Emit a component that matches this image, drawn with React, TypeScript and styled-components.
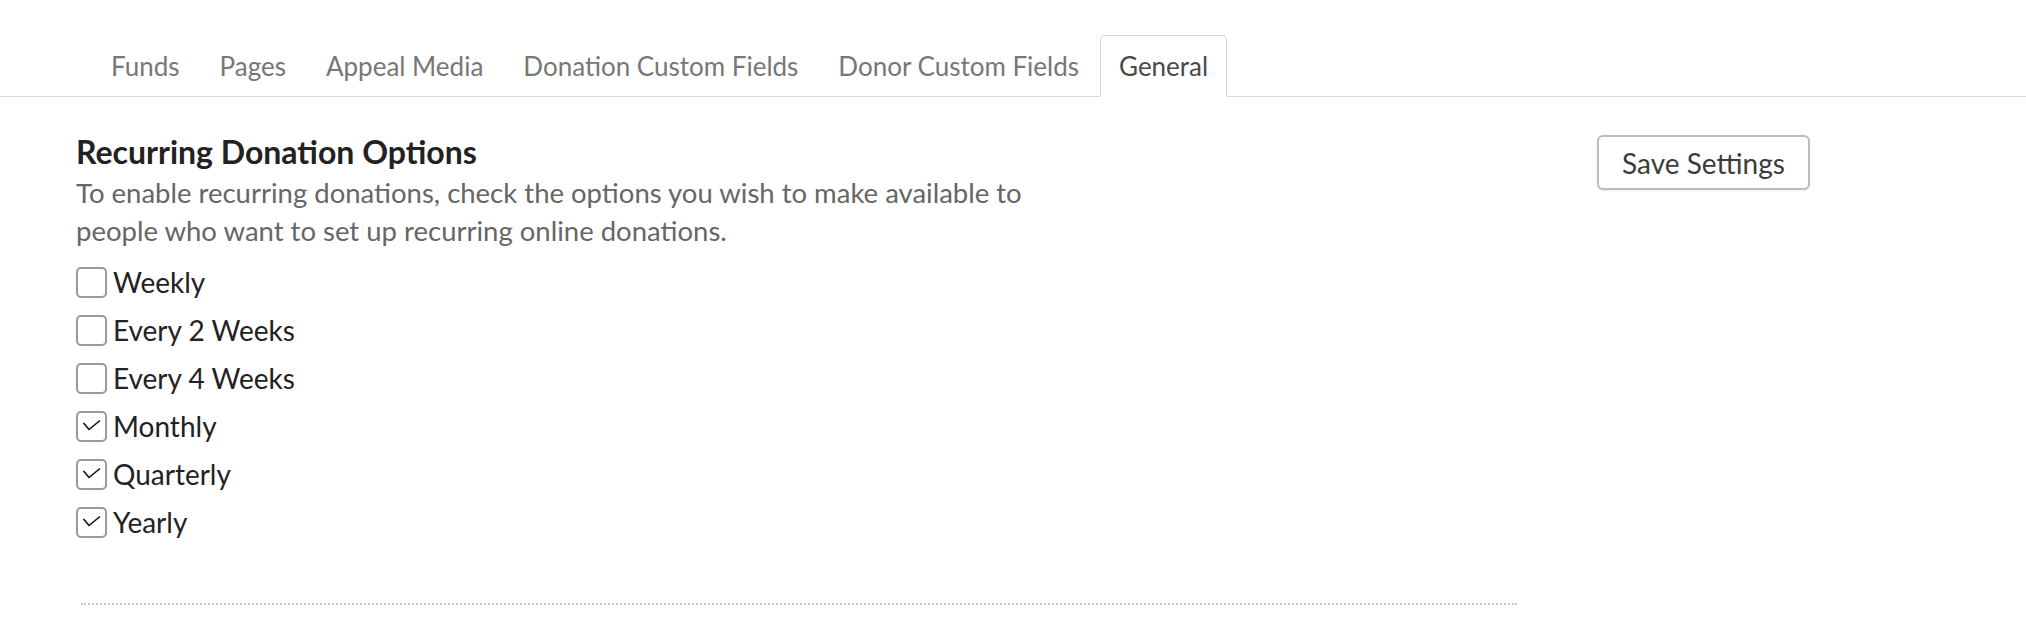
import styled, { createGlobalStyle } from 'styled-components'

const GlobalStyle = createGlobalStyle`
  html, body {
    margin: 0;
    padding: 0;
    background: #fff;
  }
  body {
    font-family: Lato, "Open Sans", "Liberation Sans", sans-serif;
    font-size: 26px;
    line-height: 1.43;
    color: #333;
  }
  * {
    box-sizing: border-box;
  }
`

const Page = styled.div`
  padding-top: 35px;
`

const TabList = styled.ul`
  display: flex;
  list-style: none;
  margin: 0;
  padding: 0 0 0 92px;
  border-bottom: 1px solid #dcdcdc;
`

const Tab = styled.li<{ $active?: boolean }>`
  margin: 0 2px -1px 0;
  padding: 12px 18px 11px;
  line-height: 37px;
  font-size: 26px;
  color: ${(p) => (p.$active ? '#4a4a4a' : '#777')};
  background: ${(p) => (p.$active ? '#fff' : 'transparent')};
  border: 1px solid ${(p) => (p.$active ? '#d6d6d6' : 'transparent')};
  border-bottom-color: ${(p) => (p.$active ? '#fff' : 'transparent')};
  border-radius: 5px 5px 0 0;
  cursor: pointer;
`

const Content = styled.div`
  display: grid;
  grid-template-columns: 1446px auto;
  column-gap: 75px;
  padding-left: 76px;
`

const Main = styled.section`
  padding-top: 37px;
`

const Title = styled.h3`
  margin: 0;
  font-size: 32px;
  line-height: 35px;
  font-weight: 700;
  color: #222;
`

const Description = styled.p`
  margin: 5px 0 9px;
  max-width: 1000px;
  font-size: 27.5px;
  line-height: 37.5px;
  color: #666;
`

const OptionList = styled.div`
  display: flex;
  flex-direction: column;
`

const OptionRow = styled.label`
  display: flex;
  align-items: center;
  height: 48px;
  gap: 6px;
  font-size: 28px;
  line-height: 37px;
  color: #222;
  cursor: pointer;
`

const Box = styled.span`
  display: inline-flex;
  width: 31px;
  height: 31px;
  border: 2px solid #9a9a9a;
  border-radius: 5px;
  background: #fff;
  flex-shrink: 0;

  svg {
    width: 27px;
    height: 27px;
  }
`

const Divider = styled.hr`
  margin: 57px 5px 0;
  border: 0;
  border-top: 2px dotted #c8c8c8;
`

const Side = styled.aside`
  padding-top: 38px;
`

const SaveButton = styled.button`
  width: 213px;
  height: 55px;
  padding: 0;
  font-family: inherit;
  font-size: 28px;
  color: #3c3c3c;
  background: #fff;
  border: 2px solid #bdbdbd;
  border-radius: 6px;
  box-shadow: 0 1px 2px rgba(0, 0, 0, 0.08);
  cursor: pointer;
`

const tabs = ['Funds', 'Pages', 'Appeal Media', 'Donation Custom Fields', 'Donor Custom Fields', 'General']

const options = [
  { label: 'Weekly', checked: false },
  { label: 'Every 2 Weeks', checked: false },
  { label: 'Every 4 Weeks', checked: false },
  { label: 'Monthly', checked: true },
  { label: 'Quarterly', checked: true },
  { label: 'Yearly', checked: true },
]

const Checkbox = ({ checked }: { checked: boolean }) => (
  <Box>
    {checked && (
      <svg viewBox="0 0 27 27">
        <path d="M5.5 10 L11 16.5 L22 7.5" fill="none" stroke="#111" strokeWidth="1.6" />
      </svg>
    )}
  </Box>
)

export default function App() {
  return (
    <Page>
      <GlobalStyle />
      <TabList>
        {tabs.map((t) => (
          <Tab key={t} $active={t === 'General'}>
            {t}
          </Tab>
        ))}
      </TabList>
      <Content>
        <Main>
          <Title>Recurring Donation Options</Title>
          <Description>
            To enable recurring donations, check the options you wish to make available to people who want to set up
            recurring online donations.
          </Description>
          <OptionList>
            {options.map((o) => (
              <OptionRow key={o.label}>
                <Checkbox checked={o.checked} />
                {o.label}
              </OptionRow>
            ))}
          </OptionList>
          <Divider />
        </Main>
        <Side>
          <SaveButton>Save Settings</SaveButton>
        </Side>
      </Content>
    </Page>
  )
}
